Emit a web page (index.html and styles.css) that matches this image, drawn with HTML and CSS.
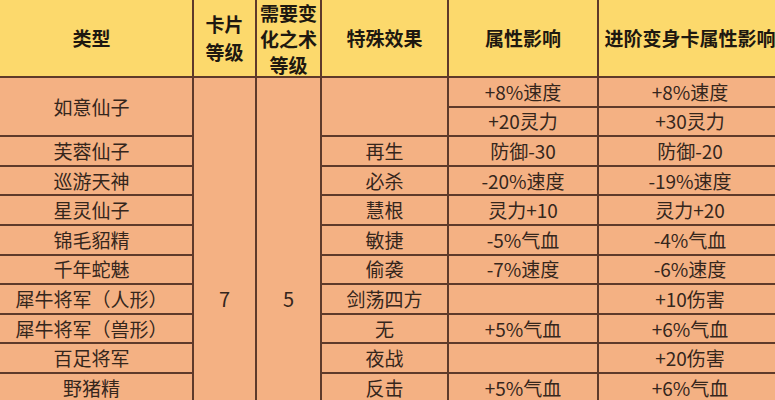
FILE: index.html
```html
<!DOCTYPE html>
<html lang="zh-CN">
<head>
<meta charset="utf-8">
<title>变身卡属性表</title>
<link rel="stylesheet" href="styles.css">
</head>
<body>
<div class="frame">
<table class="sheet">
<colgroup>
<col class="c-type"><col class="c-card"><col class="c-skill"><col class="c-effect"><col class="c-attr"><col class="c-adv">
</colgroup>
<thead>
<tr class="head">
<th><div class="hc">类型</div></th>
<th><div class="hc">卡片<br>等级</div></th>
<th><div class="hc hc-tight">需要变<br>化之术<br>等级</div></th>
<th><div class="hc">特殊效果</div></th>
<th><div class="hc">属性影响</div></th>
<th><div class="hc">进阶变身卡属性影响</div></th>
</tr>
</thead>
<tbody>
<tr class="r sub"><td rowspan="2">如意仙子</td><td rowspan="15" class="lvl">7</td><td rowspan="15" class="lvl">5</td><td rowspan="2"></td><td>+8%速度</td><td>+8%速度</td></tr>
<tr class="r sub"><td>+20灵力</td><td>+30灵力</td></tr>
<tr class="r"><td>芙蓉仙子</td><td>再生</td><td>防御-30</td><td>防御-20</td></tr>
<tr class="r"><td>巡游天神</td><td>必杀</td><td>-20%速度</td><td>-19%速度</td></tr>
<tr class="r"><td>星灵仙子</td><td>慧根</td><td>灵力+10</td><td>灵力+20</td></tr>
<tr class="r"><td>锦毛貂精</td><td>敏捷</td><td>-5%气血</td><td>-4%气血</td></tr>
<tr class="r"><td>千年蛇魅</td><td>偷袭</td><td>-7%速度</td><td>-6%速度</td></tr>
<tr class="r"><td>犀牛将军（人形）</td><td>剑荡四方</td><td></td><td>+10伤害</td></tr>
<tr class="r"><td>犀牛将军（兽形）</td><td>无</td><td>+5%气血</td><td>+6%气血</td></tr>
<tr class="r"><td>百足将军</td><td>夜战</td><td></td><td>+20伤害</td></tr>
<tr class="r"><td>野猪精</td><td>反击</td><td>+5%气血</td><td>+6%气血</td></tr>
<tr class="r"><td></td><td></td><td></td><td></td></tr>
<tr class="r"><td></td><td></td><td></td><td></td></tr>
<tr class="r"><td></td><td></td><td></td><td></td></tr>
<tr class="r"><td></td><td></td><td></td><td></td></tr>
</tbody>
</table>
</div>
</body>
</html>
```
FILE: styles.css
```css
html, body {
  margin: 0;
  padding: 0;
  overflow: hidden;
  background: #f4b183;
}
.frame {
  width: 775px;
  height: 400px;
  overflow: hidden;
}
.sheet {
  border-collapse: collapse;
  table-layout: fixed;
  width: 792px;
  margin-left: -11px;
  font-family: "Noto Sans CJK SC", "Microsoft YaHei", sans-serif;
  font-size: 19px;
  color: #35261c;
}
.c-type { width: 203px; }
.c-card { width: 63px; }
.c-skill { width: 65px; }
.c-effect { width: 127px; }
.c-attr { width: 150px; }
.c-adv { width: 184px; }
.sheet th, .sheet td {
  border: 2px solid #5e3a2a;
  padding: 0;
  text-align: center;
  vertical-align: middle;
  white-space: nowrap;
  overflow: visible;
}
.sheet th {
  border-top: 0;
  background: #fcd96c;
  color: #1e1810;
  font-weight: 700;
  height: 75px;
}
.hc {
  height: 74px;
  display: flex;
  align-items: center;
  justify-content: center;
  line-height: 28px;
}
.hc-tight { line-height: 26px; padding-top: 2px; }
.sheet td {
  background: #f4b183;
  line-height: 26px;
}
.r { height: 29.6px; }
.lvl { font-size: 20px; }
```
